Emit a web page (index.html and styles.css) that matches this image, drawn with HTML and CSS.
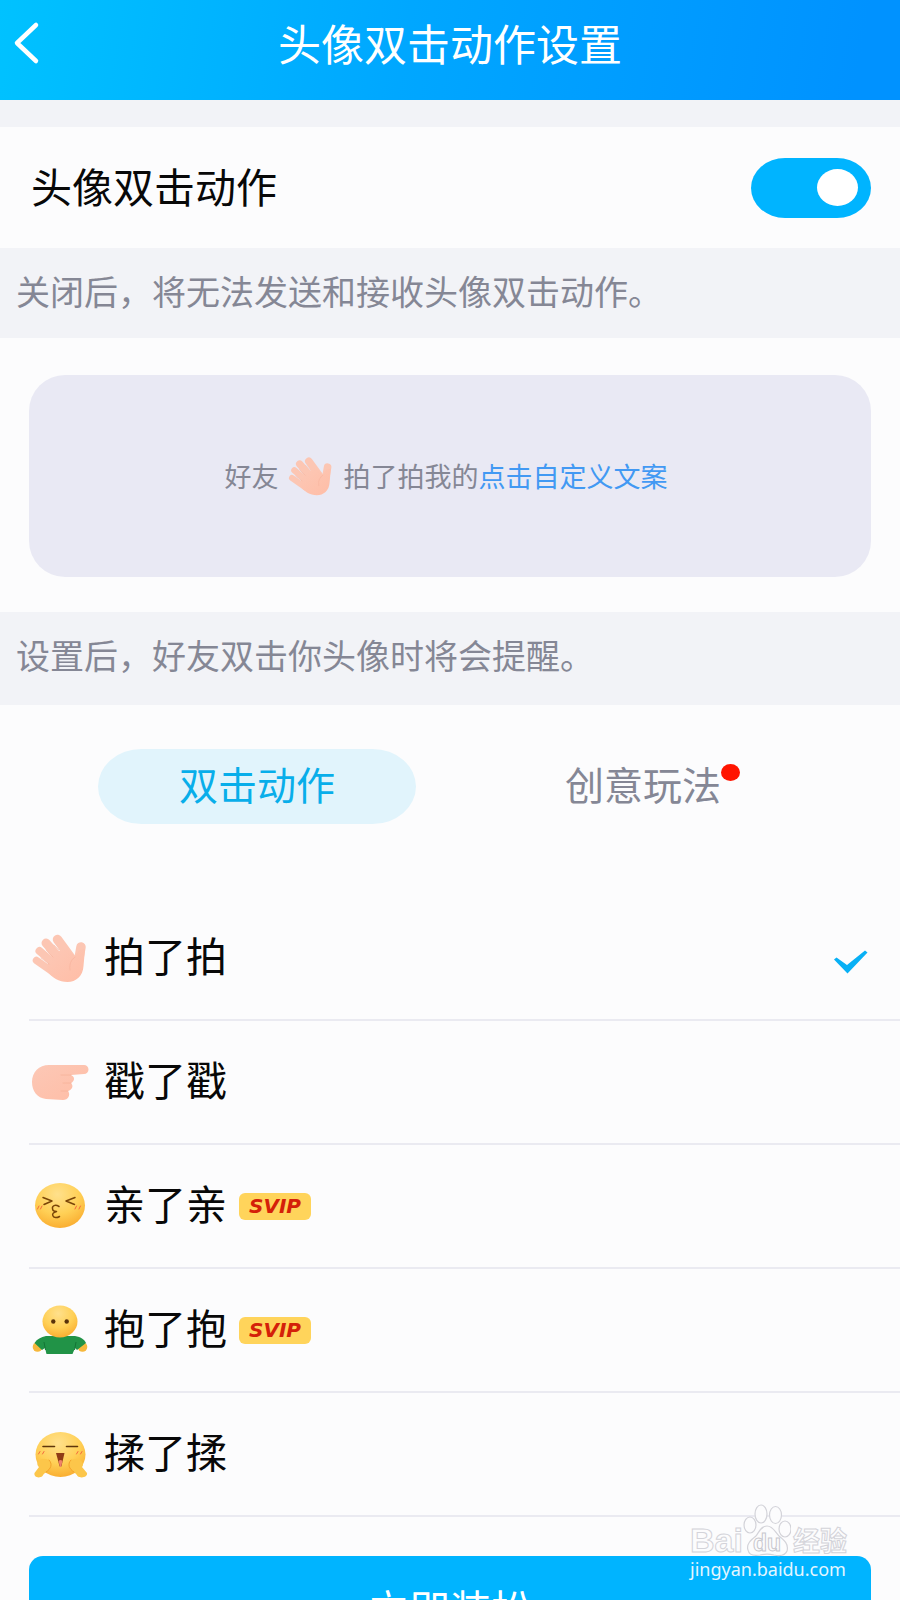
FILE: index.html
```html
<!DOCTYPE html>
<html lang="zh-CN">
<head>
  <meta charset="utf-8">
  <meta name="viewport" content="width=device-width, initial-scale=1">
  <title>头像双击动作设置</title>
  <link rel="stylesheet" href="styles.css">
</head>
<body>
  <!-- gradients and the hand, shared by the icons below -->
  <svg class="defs" width="0" height="0" aria-hidden="true">
    <defs>
      <linearGradient id="skin" x1="0" y1="0" x2="1" y2="1">
        <stop offset="0" stop-color="#fcc8b6"/>
        <stop offset="1" stop-color="#ffbda6"/>
      </linearGradient>
      <radialGradient id="face" cx="0.45" cy="0.25" r="0.8">
        <stop offset="0" stop-color="#ffe08c"/>
        <stop offset="0.55" stop-color="#ffd056"/>
        <stop offset="1" stop-color="#f9a92c"/>
      </radialGradient>
      <symbol id="hand" viewBox="0 0 60 60">
        <g fill="none" stroke="#fcc6b3" stroke-linecap="round">
          <path stroke-width="7.500" d="M7.500 32.500 24 44"/>
          <path stroke-width="8" d="M10.500 23 27 37"/>
          <path stroke-width="9" d="M17 15 32 32"/>
          <path stroke-width="9.500" d="M28.500 11.500 42 30"/>
          <path stroke-width="9.500" d="M52 19 49 36"/>
        </g>
        <path fill="url(#skin)" d="M17 42 20 32 26 25 37 20 46 28.500 50 22 56 21 54.500 38C54 48 47 54 38.500 54 30 54 23 50 17 42Z"/>
        <path fill="none" stroke="#f5ad95" stroke-width="1" stroke-linecap="round" opacity="0.500" d="M46 29C42 32 40 36 41 42M12 30 20 36M17 22 24 29M25 17 30 22"/>
      </symbol>
    </defs>
  </svg>

  <header class="header">
    <button type="button" class="back" aria-label="返回">
      <svg width="28" height="44" viewBox="0 0 28 44"><path d="M24 4 5 22 24 40" fill="none" stroke="#fff" stroke-width="4.500" stroke-linecap="round" stroke-linejoin="round"/></svg>
    </button>
    <h1>头像双击动作设置</h1>
  </header>

  <main>
    <div class="switch-row">
      <label for="doubleTap">头像双击动作</label>
      <input type="checkbox" id="doubleTap" class="switch" checked>
    </div>
    <p class="note">关闭后，将无法发送和接收头像双击动作。</p>

    <div class="preview">
      <p class="preview-card">
        <span>好友</span>
        <svg class="preview-icon" viewBox="0 0 60 60" aria-hidden="true"><use href="#hand"/></svg>
        <span>拍了拍我的<a href="#">点击自定义文案</a></span>
      </p>
    </div>
    <p class="note note-tabs">设置后，好友双击你头像时将会提醒。</p>

    <div class="tabs">
      <button type="button" class="tab active">双击动作</button>
      <button type="button" class="tab"><span class="tab-text">创意玩法<i class="dot"></i></span></button>
    </div>

    <!-- action list -->
    <form>
      <ul class="actions">
        <li>
          <label>
            <input type="radio" name="action" checked>
            <svg class="icon" viewBox="0 0 60 60" aria-hidden="true"><use href="#hand"/></svg>
            <span class="name">拍了拍</span>
            <svg class="check" viewBox="0 0 34 24" aria-hidden="true"><path fill="#08b0f5" d="M0 9.500 2.500 7.500 13 15 31 0.500 33.500 2.500 13.500 23.500Z"/></svg>
          </label>
        </li>
        <li>
          <label>
            <input type="radio" name="action">
            <svg class="icon" viewBox="0 0 60 60" aria-hidden="true">
              <path fill="url(#skin)" d="M20 13H55A4.500 4.500 0 0 1 55 22L42 23C47 25 45 30 42 31 45 34 43 38 39 39 42 43 39 48 34 48L17 47C8 46 3 39 3 30 3 20 10 13 20 13Z"/>
              <path fill="none" stroke="#f5ad95" stroke-width="1" stroke-linecap="round" opacity="0.600" d="M42 23H32M42 31H34M39 39H32"/>
            </svg>
            <span class="name">戳了戳</span>
          </label>
        </li>
        <li>
          <label>
            <input type="radio" name="action">
            <svg class="icon" viewBox="0 0 60 60" aria-hidden="true">
              <ellipse cx="31" cy="29.500" rx="25" ry="22.500" fill="url(#face)"/>
              <g fill="none" stroke="#7a4508" stroke-width="1.500" stroke-linecap="round" stroke-linejoin="round">
                <path d="M14 21.500 23 25 15 28.500M46 21.500 37 25 45.500 28.500M30 30.500C26 28 23 30 23.500 32.500 23.500 34.500 25 35.500 27.500 35.500 24 36.500 23 38 24 40 25 42 28 42 30.500 40.500"/>
              </g>
              <path fill="none" stroke="#f4683f" stroke-width="1" stroke-linecap="round" d="M8.500 33 10 30M11.500 33 13 30M46 33 47.500 30M50 33 51.500 30"/>
            </svg>
            <span class="name">亲了亲</span>
            <em class="svip">SVIP</em>
          </label>
        </li>
        <li>
          <label>
            <input type="radio" name="action">
            <svg class="icon" viewBox="0 0 60 60" aria-hidden="true">
              <circle cx="8.500" cy="47" r="4.800" fill="#f6b83c"/>
              <circle cx="53.500" cy="47" r="4.800" fill="#f6b83c"/>
              <path fill="#219347" d="M17 36H46C52 37 56 40 57 43L48 50 46 48 43.500 54H17.500L16 48 13 50 5.500 43C8 39 12 37 17 36Z"/>
              <path fill="none" stroke="#137535" stroke-width="1" d="M15 42 16.500 50M47 42 45.500 50"/>
              <ellipse cx="31" cy="21.500" rx="17.500" ry="16" fill="url(#face)"/>
              <circle cx="24.300" cy="21.500" r="2.200" fill="#59320a"/>
              <circle cx="37.700" cy="21.500" r="2.200" fill="#59320a"/>
            </svg>
            <span class="name">抱了抱</span>
            <em class="svip">SVIP</em>
          </label>
        </li>
        <li>
          <label>
            <input type="radio" name="action">
            <svg class="icon" viewBox="0 0 60 60" aria-hidden="true">
              <ellipse cx="31.500" cy="30.500" rx="25" ry="22.500" fill="url(#face)"/>
              <path fill="none" stroke="#5e350a" stroke-width="1.600" stroke-linecap="round" d="M14 22.500H25.500M37.500 22.500H48.500"/>
              <path fill="#8f3c16" d="M27 29H35.500L32.500 42Q31.500 44 30.500 42Z"/>
              <path fill="#f0826a" d="M29.500 37Q31.500 35 33.500 37L32 43H31Z"/>
              <path fill="none" stroke="#f4683f" stroke-width="1" stroke-linecap="round" d="M9.500 30 11 27.500M13.500 30 15 27.500M47.500 30 49 27.500M51.500 30 53 27.500"/>
              <path fill="#fcc64a" d="M11 36C17 32 25 38 21 44 18 48 15 49 13.500 52 10 55 4.500 53 5.500 49L10 43C7.500 41 8 38 11 36ZM51 36C45 32 37 38 41 44 44 48 47 49 48.500 52 52 55 59 53 58 49L53 43C55 41 54 38 51 36Z"/>
              <path fill="none" stroke="#f3a32b" stroke-width="1" stroke-linecap="round" d="M20 36C24 40 22 45 17 48M42 36C38 40 40 45 45 48"/>
            </svg>
            <span class="name">揉了揉</span>
          </label>
        </li>
      </ul>
      <button type="submit" class="submit">立即装扮</button>
    </form>
  </main>

  <!-- site mark over the page corner -->
  <div class="mark">
    <div class="mark-logo">
      <span class="mark-bai">Bai</span>
      <svg width="48" height="54" viewBox="0 0 48 54" aria-hidden="true">
        <g fill="#fcfcfd" stroke="#d3d3d9" stroke-width="1.200">
          <ellipse cx="7" cy="22" rx="6" ry="8"/>
          <ellipse cx="18" cy="11" rx="6" ry="9"/>
          <ellipse cx="32.500" cy="12" rx="6" ry="8.500"/>
          <ellipse cx="42" cy="26" rx="6" ry="8"/>
          <path d="M24 23C30 23 32 29 36 33 41 37 46 41 44 48 42 53 36 53 31 52 27 51 21 51 17 52 11 53 6 52 5 47 3 41 8 37 13 33 16 29 18 23 24 23Z"/>
        </g>
        <text x="24" y="48" text-anchor="middle" class="mark-du">du</text>
      </svg>
      <span class="mark-cn">经验</span>
    </div>
    <div class="mark-url">jingyan.baidu.com</div>
  </div>
</body>
</html>
```

FILE: styles.css
```css
* {
  box-sizing: border-box;
}

body {
  position: relative;
  margin: 0;
  background: #fcfcfd;
  color: #080808;
  font-family: "Noto Sans CJK SC", sans-serif;
  font-size: 41px;
  line-height: 60px;
}

button {
  border: 0;
  padding: 0;
  background: none;
  font-family: inherit;
}

.defs {
  position: absolute;
}

/* header */
.header {
  display: grid;
  grid-template-columns: 60px 1fr 60px;
  align-items: center;
  height: 100px;
  padding-bottom: 14px;
  background: linear-gradient(100deg, #00c2ff, #00a7ff 45%, #0092ff 95%);
  color: #fff;
}

.header h1 {
  margin: 0;
  padding-bottom: 2px;
  font-size: 43px;
  font-weight: 400;
  text-align: center;
}

.back {
  padding-left: 12px;
  text-align: left;
}

.back svg {
  display: block;
}

/* switch */
.switch-row {
  display: flex;
  align-items: center;
  justify-content: space-between;
  height: 148px;
  padding: 0 29px 0 31px;
  border-top: 27px solid #f2f3f7;
}

.switch-row label {
  padding-bottom: 6px;
}

.switch {
  display: flex;
  align-items: center;
  justify-content: flex-end;
  width: 120px;
  height: 60px;
  margin: 0;
  padding: 0 13px;
  border-radius: 34px / 30px;
  background: #00b4ff;
  appearance: none;
}

.switch::before {
  content: "";
  width: 41px;
  height: 37px;
  border-radius: 50%;
  background: #fff;
}

.switch:not(:checked) {
  justify-content: flex-start;
  background: #ccc;
}

.note {
  margin: 0;
  padding: 13px 16px 17px;
  background: #f2f3f7;
  color: #858795;
  font-size: 34px;
}

.note-tabs {
  padding-bottom: 20px;
}

/* preview */
.preview {
  padding: 37px 29px 35px;
}

.preview-card {
  display: flex;
  align-items: center;
  justify-content: center;
  height: 202px;
  margin: 0;
  padding-right: 8px;
  border-radius: 36px;
  background: #e9e9f4;
  color: #858795;
  font-size: 27px;
}

.preview-icon {
  width: 48px;
  height: 48px;
  margin: 0 10px 0 7px;
}

.preview-card a {
  color: #4299f3;
  text-decoration: none;
}

/* tabs */
.tabs {
  display: grid;
  grid-template-columns: 1fr 1fr;
  gap: 68px;
  padding: 44px 98px 73px;
}

.tab {
  height: 75px;
  padding-bottom: 8px;
  border-radius: 44px / 38px;
  color: #858795;
  font-size: 39px;
}

.tab.active {
  background: #e1f4fc;
  color: #08aeea;
}

.tab-text {
  position: relative;
}

.dot {
  position: absolute;
  top: 9px;
  left: 100%;
  width: 19px;
  height: 17px;
  border-radius: 50%;
  background: #ff1500;
}

/* action list */
.actions {
  margin: 0;
  padding: 0 0 0 29px;
  list-style: none;
}

.actions li {
  border-bottom: 2px solid #eaeaf1;
}

.actions label {
  display: flex;
  align-items: center;
  height: 122px;
}

.actions input {
  position: absolute;
  opacity: 0;
}

.icon {
  width: 60px;
  height: 60px;
  margin-right: 15px;
}

.name {
  padding-bottom: 8px;
}

.check {
  width: 34px;
  height: 24px;
  margin: 8px 32px 0 auto;
}

.svip {
  width: 72px;
  height: 27px;
  margin-left: 12px;
  border-radius: 6px;
  background: #ffd45b;
  color: #d42009;
  font: italic 700 20px/27px "DejaVu Sans", sans-serif;
  text-align: center;
}

.submit {
  display: block;
  width: calc(100% - 58px);
  height: 106px;
  margin: 39px 29px 0;
  padding-bottom: 4px;
  border-radius: 14px;
  background: #00b4ff;
  color: #fff;
  font-size: 41px;
}

/* site mark */
.mark {
  position: absolute;
  top: 1503px;
  right: 48px;
  width: 162px;
}

.mark-logo {
  display: flex;
  align-items: flex-end;
  height: 54px;
  color: #fcfcfd;
  font-weight: 700;
  -webkit-text-stroke: 1px #d3d3d9;
}

.mark-bai {
  font: 700 34px/34px "Liberation Sans", sans-serif;
}

.mark-cn {
  margin-left: 2px;
  font-size: 27px;
  line-height: 34px;
}

.mark-du {
  fill: #fcfcfd;
  stroke: #c8c8ce;
  stroke-width: 1px;
  font: 700 23px "Liberation Sans", sans-serif;
}

.mark-url {
  color: #e4f6ff;
  font: 400 18px/24px "Noto Sans", sans-serif;
}
```
